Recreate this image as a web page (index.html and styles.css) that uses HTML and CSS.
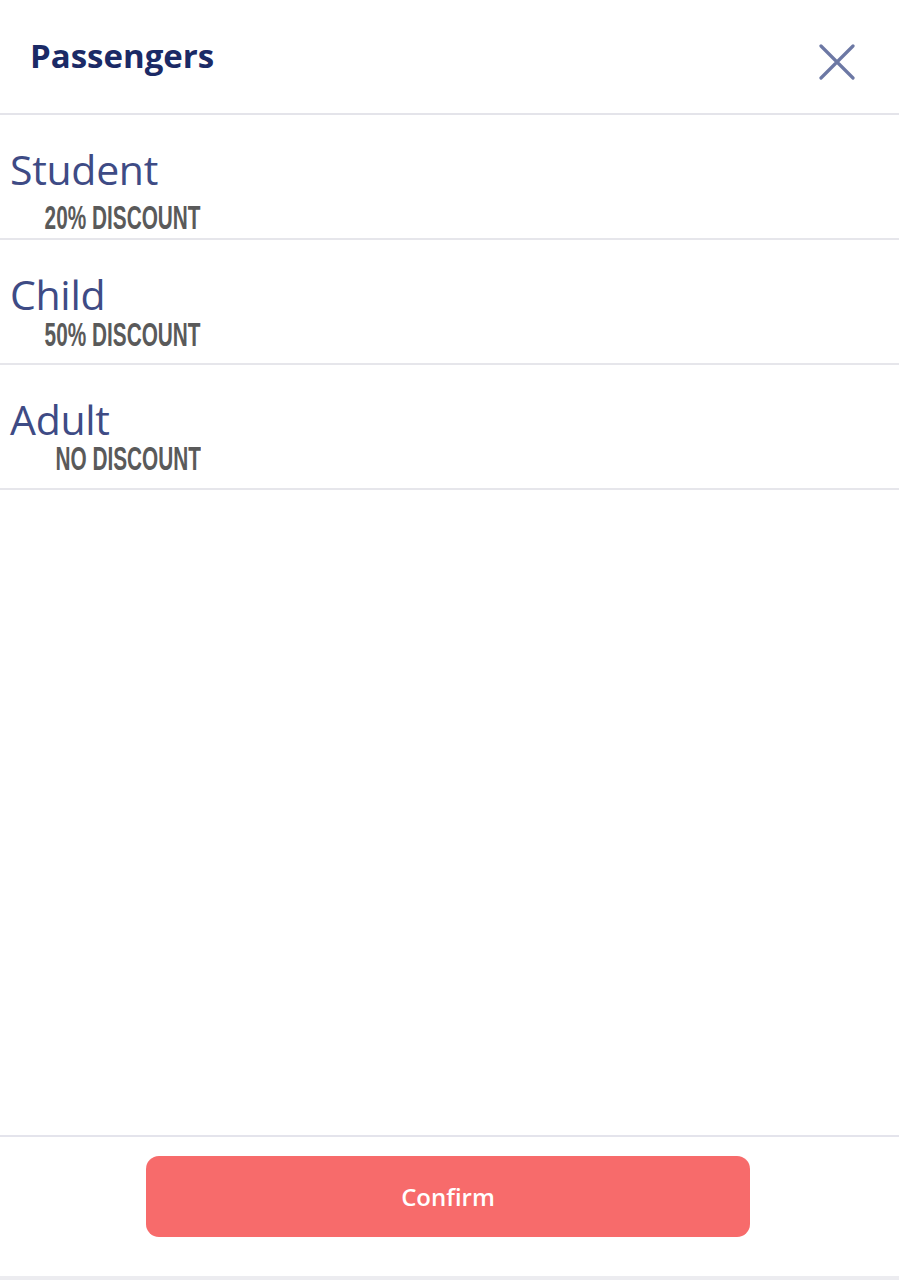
FILE: index.html
```html
<!DOCTYPE html>
<html lang="en">
<head>
<meta charset="utf-8">
<title>Passengers</title>
<link rel="stylesheet" href="styles.css">
</head>
<body>
<div class="sheet">
  <header class="sheet-header">
    <h1 class="sheet-title">Passengers</h1>
    <button class="close-btn" aria-label="Close">
      <svg width="36" height="36" viewBox="0 0 36 36" fill="none">
        <path d="M2 2 L34 34 M34 2 L2 34" stroke="#6c78a4" stroke-width="3.2" stroke-linecap="round"/>
      </svg>
    </button>
  </header>
  <ul class="passenger-list">
    <li class="passenger-row row-student">
      <div class="passenger-name">Student</div>
      <div class="discount"><span class="discount-text">20% DISCOUNT</span></div>
    </li>
    <li class="passenger-row row-child">
      <div class="passenger-name">Child</div>
      <div class="discount"><span class="discount-text">50% DISCOUNT</span></div>
    </li>
    <li class="passenger-row row-adult">
      <div class="passenger-name">Adult</div>
      <div class="discount"><span class="discount-text">NO DISCOUNT</span></div>
    </li>
  </ul>
  <div class="spacer"></div>
  <footer class="sheet-footer">
    <button class="confirm-btn">Confirm</button>
  </footer>
  <div class="bottom-strip"></div>
</div>
</body>
</html>
```

FILE: styles.css
```css
* { box-sizing: border-box; }
html, body { margin: 0; padding: 0; background: #ffffff; }
body { width: 899px; height: 1280px; overflow: hidden; }

.sheet {
  height: 1280px;
  display: flex;
  flex-direction: column;
}

.sheet-header {
  height: 115px;
  flex: 0 0 auto;
  display: flex;
  align-items: flex-start;
  justify-content: space-between;
  padding: 0 44px 0 30px;
  border-bottom: 2px solid #e4e4ea;
}

.sheet-title {
  margin: 36px 0 0 0;
  font-family: "Open Sans", "Liberation Sans", sans-serif;
  font-weight: 700;
  font-size: 33px;
  line-height: 40px;
  letter-spacing: 0;
  color: #1b2a66;
}

.close-btn {
  margin-top: 44px;
  padding: 0;
  border: 0;
  background: none;
  width: 36px;
  height: 36px;
}
.close-btn svg { display: block; }

.passenger-list {
  list-style: none;
  margin: 0;
  padding: 0;
}

.passenger-row {
  height: 125px;
  padding: 30px 0 0 10px;
  border-bottom: 2px solid #e6e6eb;
}

.passenger-name {
  font-family: "Open Sans", "Liberation Sans", sans-serif;
  font-weight: 400;
  font-size: 41px;
  line-height: 48px;
  color: #3e4b85;
  letter-spacing: -0.3px;
}

.discount {
  width: 191px;
  display: flex;
  justify-content: flex-end;
  white-space: nowrap;
  height: 30px;
}
.row-student .discount { margin-top: 10px; }
.row-child .discount { margin-top: 2px; }
.row-adult .discount { margin-top: 1px; }

.discount-text {
  flex: 0 0 auto;
  display: block;
  font-family: "Liberation Sans", "DejaVu Sans", sans-serif;
  font-weight: 700;
  font-size: 33px;
  line-height: 30px;
  color: #5a5a5a;
  transform: scaleX(0.63);
  transform-origin: right center;
}

.spacer { flex: 1 1 auto; }

.sheet-footer {
  flex: 0 0 auto;
  height: 141px;
  border-top: 2px solid #e4e4ec;
  padding: 19px 0 0 146px;
}

.confirm-btn {
  display: block;
  width: 604px;
  height: 81px;
  border: 0;
  border-radius: 13px;
  background: #f76b6b;
  color: #ffffff;
  font-family: "Open Sans", "Liberation Sans", sans-serif;
  font-weight: 600;
  font-size: 24px;
  padding: 0;
}

.bottom-strip {
  flex: 0 0 auto;
  height: 4px;
  background: #ececf0;
}
```
